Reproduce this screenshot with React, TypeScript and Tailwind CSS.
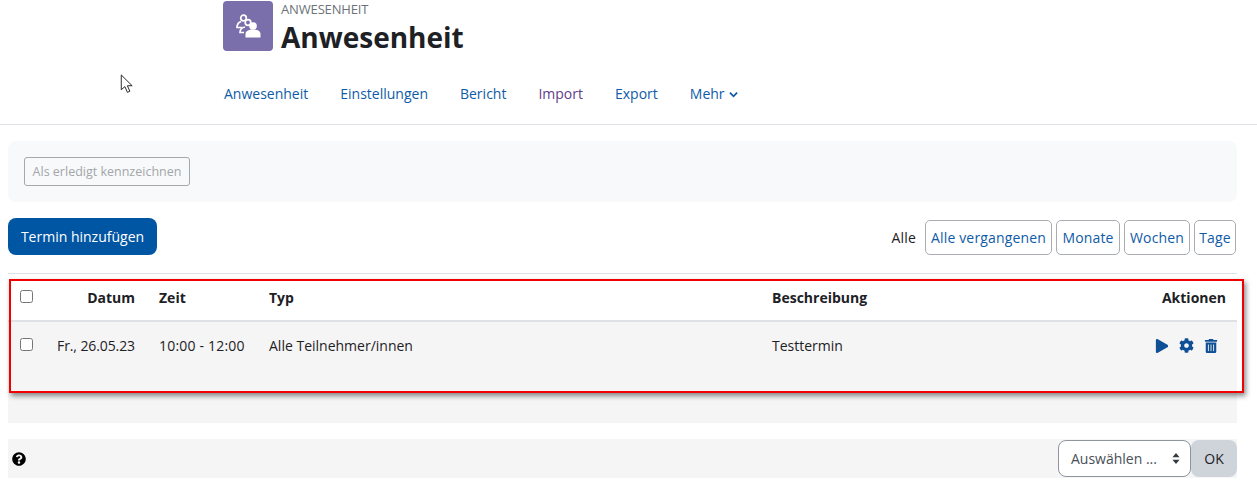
import { FaCog, FaPlay, FaQuestionCircle, FaTrashAlt } from "react-icons/fa";

const navItems = ["Anwesenheit", "Einstellungen", "Bericht", "Import", "Export"];
const filters = [
  { label: "Alle vergangenen", width: "w-[127px]" },
  { label: "Monate", width: "w-[64px]" },
  { label: "Wochen", width: "w-[66px]" },
  { label: "Tage", width: "w-[42px]" },
];

function ActivityIcon() {
  return (
    <svg viewBox="0 0 25 24" className="w-[25px] h-6 text-white" fill="none" stroke="currentColor">
      <circle cx="7.5" cy="4" r="2.8" strokeWidth="1.7" />
      <circle cx="12" cy="8.5" r="2.8" strokeWidth="1.7" />
      <path d="M5 7.5C2.5 8.5 1 10.5 1 13.5h5" strokeWidth="1.7" />
      <path d="M9 13c-3 .5-5 2.5-5 5.5h4" strokeWidth="1.7" />
      <circle cx="17" cy="12" r="3.8" fill="currentColor" stroke="none" />
      <path d="M9.5 23.5V20c0-3 3-4.500 7.500-4.500s7.500 1.500 7.500 4.500v3.500z" fill="currentColor" stroke="none" />
    </svg>
  );
}

function Cursor() {
  return (
    <svg viewBox="0 0 14 22" className="absolute left-[120px] top-[74px] w-[14px] h-[21px]" fill="white" stroke="#222" strokeWidth="1">
      <path d="M1 1v15.500l3.800-3.300 2.600 6 2.600-1.100-2.600-5.800h5z" />
    </svg>
  );
}

export default function App() {
  return (
    <div className="relative w-[1257px] h-[498px] overflow-hidden bg-white text-[14px] text-[#1d2125] font-['Open_Sans',sans-serif]">
      <Cursor />
      {/* Header */}
      <header className="h-[125px] border-b border-[#dee2e6] pl-[223px] pt-px">
        <div className="flex gap-2">
          <div className="w-[50px] h-[50px] rounded-[4px] bg-[#7b6fab] flex items-center justify-center">
            <ActivityIcon />
          </div>
          <div>
            <div className="text-[13px] tracking-[-0.15px] leading-[16px] text-[#6a737b]">ANWESENHEIT</div>
            <h1 className="text-[28px] leading-[38px] mt-px font-bold">Anwesenheit</h1>
          </div>
        </div>
        <nav className="flex mt-[27px] pl-px gap-8 leading-[22px] text-[#0f5ba7]">
          {navItems.map((item) => (
            <span key={item} className={item === "Import" ? "text-[#5f3d8a]" : ""}>
              {item}
            </span>
          ))}
          <span className="flex items-center gap-1">
            Mehr
            <svg viewBox="0 0 10 10" className="w-[9px] h-[9px]" fill="none" stroke="currentColor" strokeWidth="2">
              <path d="M1 3l4 4 4-4" />
            </svg>
          </span>
        </nav>
      </header>

      <main className="pl-2 pr-5">
        <div className="mt-4 h-[61px] rounded-lg bg-[#f8f9fa] pl-4 pt-4">
          <button className="h-[29px] w-[166px] pt-[2px] rounded-[3px] border border-[#a5a8ac] text-[12.5px] text-[#a3a6aa]">
            Als erledigt kennzeichnen
          </button>
        </div>

        {/* Toolbar */}
        <div className="mt-4 flex items-start justify-between h-[56px] border-b border-[#dee2e6]">
          <button className="h-[37px] w-[149px] rounded-lg bg-[#0056a3] text-white">Termin hinzufügen</button>
          <div className="flex items-center gap-1 mt-0.5 pr-px text-[#0f5ba7] tracking-[0.15px]">
            <span className="text-[#1d2125] mr-[5px]">Alle</span>
            {filters.map((f) => (
              <span key={f.label} className={`${f.width} h-[35px] flex items-center justify-center rounded-[5px] border border-[#a9adb1]`}>
                {f.label}
              </span>
            ))}
          </div>
        </div>

        {/* Sessions table */}
        <div className="h-[48px] border-b-2 border-[#dee2e6] flex items-center font-bold">
          <input type="checkbox" className="ml-3 w-[13px] h-[13px] mb-[1px]" />
          <span className="w-[102px] text-right">Datum</span>
          <span className="ml-6 w-[110px]">Zeit</span>
          <span className="w-[503px]">Typ</span>
          <span className="w-[300px]">Beschreibung</span>
          <span className="w-[154px] text-right">Aktionen</span>
        </div>
        <div className="h-[101px] bg-[#f5f5f5] flex items-start pt-[14px] leading-[19px]">
          <input type="checkbox" className="ml-3 mt-[2px] w-[13px] h-[13px]" />
          <span className="w-[102px] text-right tracking-[-0.1px]">Fr., 26.05.23</span>
          <span className="ml-6 w-[110px] tracking-[0.2px]">10:00 - 12:00</span>
          <span className="w-[503px]">Alle Teilnehmer/innen</span>
          <span className="w-[383px]">Testtermin</span>
          <span className="flex items-center gap-[10px] pt-[2px] text-[#0f4f96] text-[14px]">
            <FaPlay />
            <FaCog className="text-[15px]" />
            <FaTrashAlt className="text-[14px]" />
          </span>
        </div>

        {/* Bottom bar */}
        <div className="mt-4 h-[39px] bg-[#f5f5f5] flex items-center justify-between">
          <FaQuestionCircle className="ml-1 text-black text-[14px]" />
          <div className="flex items-center">
            <div className="w-[133px] h-[37px] rounded-lg border border-[#8f959e] bg-white flex items-center justify-between pl-3 pr-2.5 text-[#495057]">
              Auswählen ...
              <svg viewBox="0 0 10 14" className="w-2 h-[11px] text-[#343a40]" fill="currentColor">
                <path d="M5 0l4.500 5.500h-9zM5 14L.5 8.500h9z" />
              </svg>
            </div>
            <button className="w-[46px] h-[37px] rounded-lg bg-[#ced4da] text-[#1d2125]">OK</button>
          </div>
        </div>
      </main>

      {/* Red annotation frame */}
      <div className="absolute left-[9px] top-[279px] w-[1235px] h-[114px] border-2 border-[#f00000] shadow-[2px_3px_5px_rgba(0,0,0,0.45)]" />
    </div>
  );
}
